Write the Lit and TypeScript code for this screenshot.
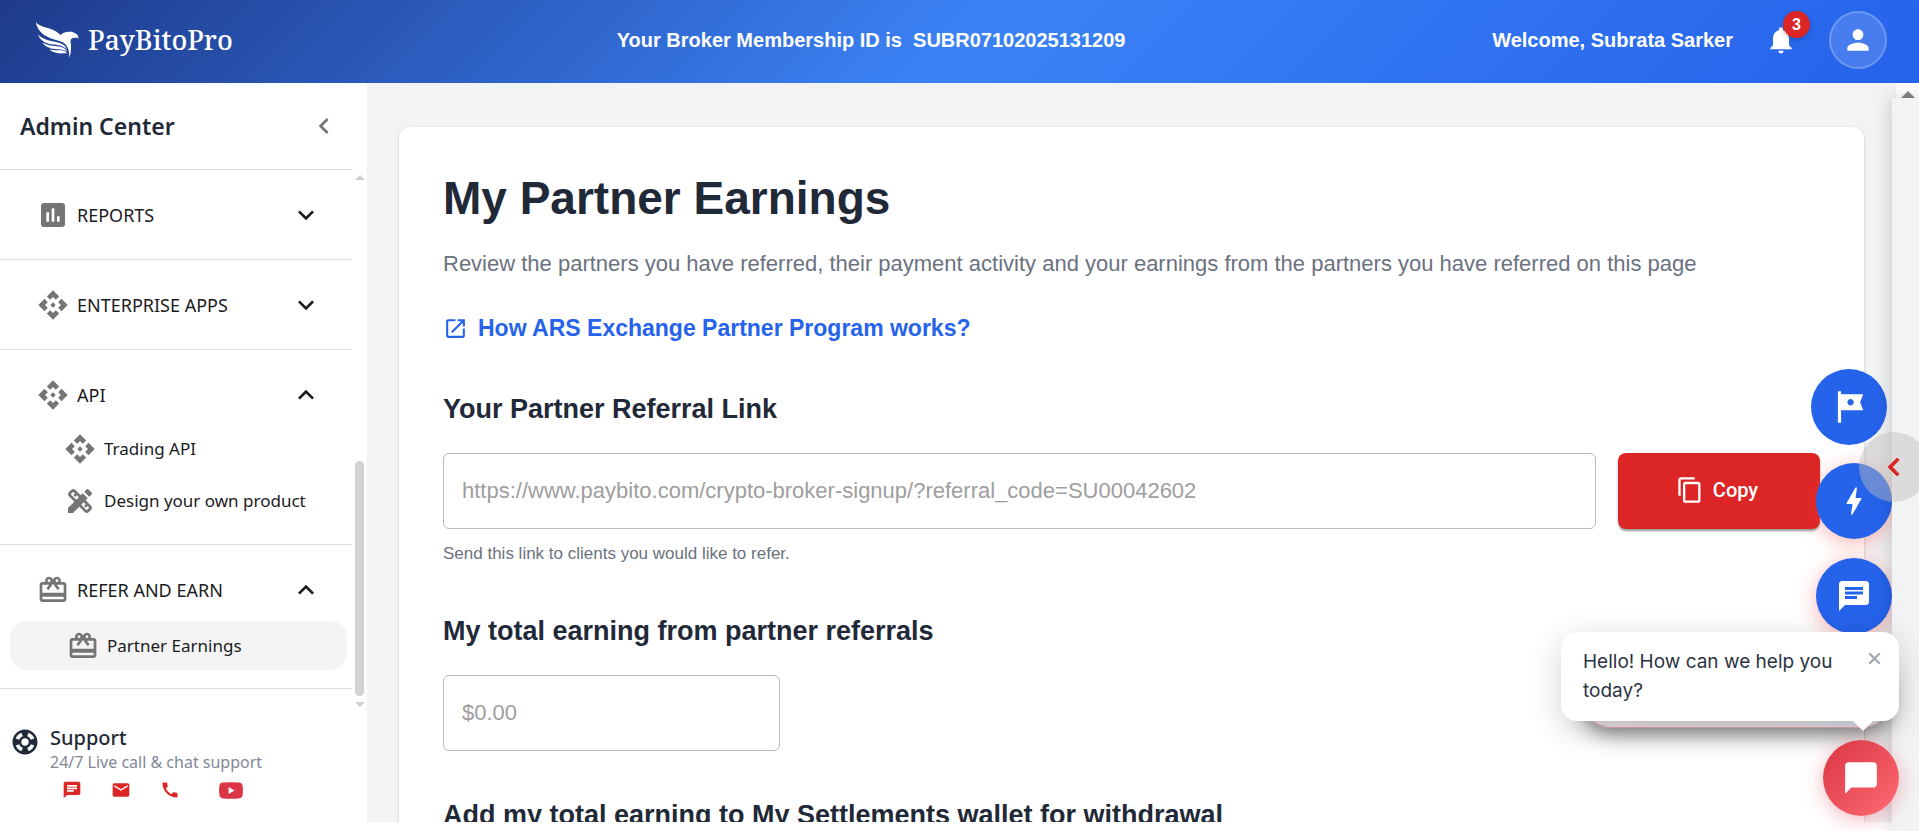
import { LitElement, html, css, svg } from "lit";
import { customElement, property } from "lit/decorators.js";

const ICONS: Record<string, string> = {
  assessment: "M19 3H5c-1.1 0-2 .9-2 2v14c0 1.1.9 2 2 2h14c1.1 0 2-.9 2-2V5c0-1.1-.9-2-2-2zM9 17H7v-7h2v7zm4 0h-2V7h2v10zm4 0h-2v-4h2v4z",
  api: "M14 12l-2 2-2-2 2-2 2 2zm-2-6l2.12 2.12 2.5-2.5L12 1 7.38 5.62l2.5 2.5L12 6zm-6 6l2.12-2.12-2.5-2.5L1 12l4.62 4.62 2.5-2.5L6 12zm12 0l-2.12 2.12 2.5 2.5L23 12l-4.62-4.62-2.5 2.5L18 12zm-6 6l-2.12-2.12-2.5 2.5L12 23l4.62-4.62-2.5-2.5L12 18z",
  design: "M16.24 11.51l1.57-1.57-3.75-3.75-1.57 1.57-4.14-4.13c-.78-.78-2.05-.78-2.83 0l-1.9 1.9c-.78.78-.78 2.05 0 2.83l4.13 4.13L3 17.25V21h3.75l4.76-4.76 4.13 4.13c.95.95 2.23.6 2.83 0l1.9-1.9c.78-.78.78-2.05 0-2.83l-4.13-4.13zm-7.06-.44L5.04 6.94l1.89-1.9L8.2 6.31 7.02 7.5l1.41 1.41 1.19-1.19 1.45 1.45-1.89 1.9zm7.88 7.89l-4.13-4.13 1.9-1.9 1.45 1.45-1.19 1.19 1.41 1.41 1.19-1.19 1.27 1.27-1.9 1.9zM20.71 7.04c.39-.39.39-1.02 0-1.41l-2.34-2.34c-.47-.47-1.12-.29-1.41 0l-1.83 1.83 3.75 3.75 1.83-1.83z",
  redeem: "M20 6h-2.18c.11-.31.18-.65.18-1 0-1.66-1.34-3-3-3-1.05 0-1.96.54-2.5 1.35l-.5.67-.5-.68C10.96 2.54 10.05 2 9 2 7.34 2 6 3.34 6 5c0 .35.07.69.18 1H4c-1.11 0-1.99.89-1.99 2L2 19c0 1.11.89 2 2 2h16c1.11 0 2-.89 2-2V8c0-1.11-.89-2-2-2zm-5-2c.55 0 1 .45 1 1s-.45 1-1 1-1-.45-1-1 .45-1 1-1zM9 4c.55 0 1 .45 1 1s-.45 1-1 1-1-.45-1-1 .45-1 1-1zm11 15H4v-2h16v2zm0-5H4V8h5.08L7 10.83 8.62 12 11 8.76l1-1.36 1 1.36L15.38 12 17 10.83 14.92 8H20v6z",
  support: "M12 2C6.48 2 2 6.48 2 12s4.48 10 10 10 10-4.48 10-10S17.52 2 12 2zm7.46 7.12l-2.78 1.15c-.51-1.36-1.58-2.44-2.95-2.94l1.15-2.78c2.1.8 3.77 2.47 4.58 4.57zM12 15c-1.66 0-3-1.34-3-3s1.34-3 3-3 3 1.34 3 3-1.34 3-3 3zM9.13 4.54l1.17 2.78c-1.38.5-2.47 1.59-2.98 2.97L4.54 9.13c.81-2.11 2.48-3.78 4.59-4.59zM4.54 14.87l2.78-1.15c.51 1.38 1.59 2.46 2.97 2.96l-1.17 2.78c-2.1-.81-3.77-2.48-4.58-4.59zm10.34 4.59l-1.15-2.78c1.37-.51 2.45-1.59 2.95-2.97l2.78 1.17c-.81 2.1-2.48 3.77-4.58 4.58z",
  more: "M16.59 8.59L12 13.17 7.41 8.59 6 10l6 6 6-6z",
  less: "M12 8l-6 6 1.41 1.41L12 10.83l4.59 4.58L18 14z",
  left: "M15.41 7.41L14 6l-6 6 6 6 1.41-1.41L10.83 12z",
  chat: "M20 2H4c-1.1 0-1.99.9-1.99 2L2 22l4-4h14c1.1 0 2-.9 2-2V4c0-1.1-.9-2-2-2zM6 9h12v2H6V9zm8 5H6v-2h8v2zm4-6H6V6h12v2z",
  bubble: "M20 2H4c-1.1 0-2 .9-2 2v18l4-4h14c1.1 0 2-.9 2-2V4c0-1.1-.9-2-2-2z",
  mail: "M20 4H4c-1.1 0-1.99.9-1.99 2L2 18c0 1.1.9 2 2 2h16c1.1 0 2-.9 2-2V6c0-1.1-.9-2-2-2zm0 4l-8 5-8-5V6l8 5 8-5v2z",
  phone: "M20.01 15.38c-1.23 0-2.42-.2-3.53-.56-.35-.12-.74-.03-1.01.24l-1.57 1.97c-2.83-1.35-5.48-3.9-6.89-6.83l1.95-1.66c.27-.28.35-.67.24-1.02-.37-1.11-.56-2.3-.56-3.53 0-.54-.45-.99-.99-.99H4.19C3.65 3 3 3.24 3 3.99 3 13.28 10.73 21 20.01 21c.71 0 .99-.63.99-1.18v-3.45c0-.54-.45-.99-.99-.99z",
  bell: "M12 22c1.1 0 2-.9 2-2h-4c0 1.1.89 2 2 2zm6-6v-5c0-3.07-1.64-5.64-4.5-6.32V4c0-.83-.67-1.5-1.5-1.5s-1.5.67-1.5 1.5v.68C7.63 5.36 6 7.92 6 11v5l-2 2v1h16v-1l-2-2z",
  person: "M12 12c2.21 0 4-1.79 4-4s-1.79-4-4-4-4 1.79-4 4 1.79 4 4 4zm0 2c-2.67 0-8 1.34-8 4v2h16v-2c0-2.66-5.33-4-8-4z",
  copy: "M16 1H4c-1.1 0-2 .9-2 2v14h2V3h12V1zm3 4H8c-1.1 0-2 .9-2 2v14c0 1.1.9 2 2 2h11c1.1 0 2-.9 2-2V7c0-1.1-.9-2-2-2zm0 16H8V7h11v14z",
  open: "M19 19H5V5h7V3H5c-1.11 0-2 .9-2 2v14c0 1.1.89 2 2 2h14c1.1 0 2-.9 2-2v-7h-2v7zM14 3v2h3.59l-9.83 9.83 1.41 1.41L19 6.41V10h2V3h-7z",
  tour: "M21 4H7V2H5v20h2v-8h14l-2-5 2-5zm-6 5c0 1.1-.9 2-2 2s-2-.9-2-2 .9-2 2-2 2 .9 2 2z",
  bolt: "M11 21h-1l1-7H7.5c-.58 0-.57-.32-.38-.66.19-.34.05-.08.07-.12C8.48 10.94 10.42 7.54 13 3h1l-1 7h3.5c.49 0 .56.33.47.51l-.07.15C12.96 17.55 11 21 11 21z",
  close: "M19 6.41L17.59 5 12 10.59 6.41 5 5 6.41 10.59 12 5 17.59 6.41 19 12 13.41 17.59 19 19 17.59 13.41 12z",
};

const icon = (name: string, size: number) => html`<svg
  width=${size} height=${size} viewBox="0 0 24 24" fill="currentColor" aria-hidden="true"
>${svg`<path d=${ICONS[name]}></path>`}</svg>`;

interface NavItem { icon: string; label: string; active?: boolean }
interface NavSection { icon: string; label: string; items?: NavItem[] }

const SECTIONS: NavSection[] = [
  { icon: "assessment", label: "REPORTS" },
  { icon: "api", label: "ENTERPRISE APPS" },
  {
    icon: "api", label: "API",
    items: [{ icon: "api", label: "Trading API" }, { icon: "design", label: "Design your own product" }],
  },
  { icon: "redeem", label: "REFER AND EARN", items: [{ icon: "redeem", label: "Partner Earnings", active: true }] },
];

const reset = css`
  * { box-sizing: border-box; margin: 0; }
  svg { display: block; flex: none; }
  button { border: 0; background: none; padding: 0; font: inherit; color: inherit; cursor: pointer; }
  a { color: inherit; text-decoration: none; }
`;

@customElement("top-bar")
class TopBar extends LitElement {
  static styles = [reset, css`
    :host {
      display: flex; align-items: center; justify-content: space-between; flex: none;
      height: 83px; padding: 0 32px 3px; color: #fff; box-sizing: border-box;
      background: linear-gradient(135deg, #1e3a8a 0%, #3b82f6 50%, #2563eb 100%);
      font: bold 20px/30px "Liberation Sans", Arial, sans-serif;
    }
    .logo { display: flex; align-items: center; gap: 9px; width: 218px; padding-left: 4px; font: 500 27px/36px "Noto Serif", serif; }
    .member { white-space: pre; }
    .user { display: flex; align-items: center; gap: 32px; }
    .bell { position: relative; }
    .badge {
      position: absolute; left: 18px; top: -13px; width: 27px; height: 27px; border-radius: 50%;
      background: #dc2626; font-size: 16px; line-height: 27px; text-align: center;
      box-shadow: 0 2px 4px rgba(0, 0, 0, 0.2);
    }
    .avatar {
      display: grid; place-items: center; width: 58px; height: 58px; border-radius: 50%;
      background: rgba(255, 255, 255, 0.15); border: 2px solid rgba(255, 255, 255, 0.2);
    }
  `];
  render() {
    return html`
      <a class="logo" href="#">
        <svg width="43" height="36" viewBox="0 0 43 36" fill="#fff" aria-hidden="true">
          <path d="M0 0C2 3 5 4 10 5.500C17 7.500 21 9.500 24.500 13C26 11.500 27.500 10.500 30 10.200C34 9.300 37.500 9.800 39 11.300C41 12 42.700 13.500 42.300 17C41.500 15.800 40.500 15.700 39 15.800C36 16 34.300 17.200 34.500 19.500C35.600 25 35.200 31 33.300 36C33.500 29 32 24 28 21C24 18.200 15 17.500 9 13.500C4 10 .5 5.500 0 0Z"/>
          <path d="M2 12.500C7 17.500 14 19 20 20C25.500 21 29.500 23 31 27.500C27 23.500 22 23 16 22.300C9.500 21.500 4 18.500 2 12.500Z"/>
          <path d="M6.500 20.500C11 23.500 16 23.800 21 24.200C26 24.700 29.500 26 31 29.500C27.500 27.200 23.500 27.300 19 27C13.500 26.600 9 24.500 6.500 20.500Z"/>
          <path d="M13.500 27.500C18 28.500 22 28 25.500 28.300C28.500 28.700 30.200 29.800 31 31.500C28.500 31 26 31.600 23 31.300C19 30.900 15.500 29.800 13.500 27.500Z"/>
        </svg>
        <span>PayBitoPro</span>
      </a>
      <p class="member">Your Broker Membership ID is  SUBR07102025131209</p>
      <div class="user">
        <span>Welcome, Subrata Sarker</span>
        <button class="bell" aria-label="Notifications">${icon("bell", 32)}<span class="badge">3</span></button>
        <button class="avatar" aria-label="Account">${icon("person", 32)}</button>
      </div>`;
  }
}

@customElement("side-nav")
class SideNav extends LitElement {
  static styles = [reset, css`
    :host {
      display: flex; flex-direction: column; flex: none; width: 367px; background: #fff; color: #1b1b1d;
      font: 17px/26px "Noto Sans", sans-serif;
    }
    .head {
      display: flex; align-items: center; justify-content: space-between; height: 87px;
      margin-right: 15px; padding: 0 12px 0 20px; border-bottom: 1px solid #dedede;
    }
    .head h2 { font-size: 23px; line-height: 34px; font-weight: 600; color: #1f2937; }
    .head button { color: #757575; }
    .scroll { flex: 1; display: flex; min-height: 0; }
    .list { flex: 1; overflow: hidden; }
    section { padding: 17px 0; border-bottom: 1px solid #dedede; }
    .row {
      display: flex; align-items: center; gap: 8px; width: 100%; height: 55px; padding: 0 30px 0 37px;
      font-size: 18px; text-align: left;
    }
    .row span { flex: 1; }
    .row svg:first-child, .item svg { color: #757575; }
    .items { padding-top: 1px; }
    .item { display: flex; align-items: center; gap: 8px; height: 52px; padding-left: 64px; }
    .item.active { height: 49px; margin: 3px 5px 1px 10px; padding-left: 57px; border-radius: 16px; background: #f4f4f4; }
    .bar { display: flex; flex-direction: column; align-items: center; width: 15px; padding: 5px 0 4px; }
    .up, .down { border: 5px solid transparent; }
    .up { border-top: 0; border-bottom-color: #cfcfcf; }
    .down { border-bottom: 0; border-top-color: #cfcfcf; }
    .track { flex: 1; display: flex; flex-direction: column; justify-content: flex-end; padding: 6px 0; }
    .thumb { width: 9px; height: 46%; border-radius: 5px; background: #d2d2d2; }
    .help { display: grid; grid-template-columns: 30px 1fr; column-gap: 10px; padding: 14px 10px 22px; }
    .help > svg { color: #1f2937; margin-top: 2px; }
    .help h3 { font-size: 20px; line-height: 26px; font-weight: 500; color: #1f2937; }
    .help p { font-size: 16px; line-height: 22px; color: #828796; }
    .links { display: flex; align-items: center; padding: 7px 0 0 12px; gap: 29px; color: #dc2626; }
    .links a:last-child { padding-left: 10px; }
  `];
  render() {
    return html`
      <div class="head"><h2>Admin Center</h2><button aria-label="Collapse menu">${icon("left", 32)}</button></div>
      <div class="scroll">
        <nav class="list">
          ${SECTIONS.map((s) => html`<section>
            <button class="row">${icon(s.icon, 32)}<span>${s.label}</span>${icon(s.items ? "less" : "more", 32)}</button>
            ${s.items ? html`<div class="items">${s.items.map((i) => html`
              <a class="item ${i.active ? "active" : ""}" href="#">${icon(i.icon, 32)}<span>${i.label}</span></a>`)}</div>` : ""}
          </section>`)}
        </nav>
        <div class="bar"><i class="up"></i><div class="track"><div class="thumb"></div></div><i class="down"></i></div>
      </div>
      <div class="help">
        ${icon("support", 30)}
        <div>
          <h3>Support</h3>
          <p>24/7 Live call &amp; chat support</p>
          <div class="links">
            <a href="#" aria-label="Chat">${icon("chat", 20)}</a>
            <a href="#" aria-label="Email">${icon("mail", 20)}</a>
            <a href="#" aria-label="Call">${icon("phone", 20)}</a>
            <a href="#" aria-label="YouTube"><svg width="24" height="17" viewBox="0 0 24 17" aria-hidden="true">
              <path fill="#dc3545" d="M4 .6Q12-.3 20 .6 23.300 1 23.600 4 24.200 8.500 23.600 13 23.300 16 20 16.400 12 17.300 4 16.400 .7 16 .4 13-.2 8.500 .4 4 .7 1 4 .6Z"/>
              <path fill="#fff" d="M9.600 5v7l6-3.500z"/></svg></a>
          </div>
        </div>
      </div>`;
  }
}

@customElement("partner-earnings")
class PartnerEarnings extends LitElement {
  static styles = [reset, css`
    :host {
      display: block; flex: 1; min-width: 0; overflow: hidden; padding: 44px 32px 0; background: #f2f3f5;
      font: 22px/33px "Liberation Sans", Arial, sans-serif; color: #1f2937;
    }
    .card {
      min-height: 100%; padding: 43px 44px 200px; border-radius: 12px; background: #fff;
      box-shadow: 0 1px 3px rgba(0, 0, 0, 0.2);
    }
    h1 { font-size: 46px; line-height: 56px; }
    .intro { margin-top: 21px; color: #6b7280; }
    .guide {
      display: flex; align-items: center; gap: 10px; width: fit-content; margin-top: 31px;
      font-size: 23px; line-height: 34px; font-weight: bold; color: #2563eb;
    }
    h2 { margin: 44px 0 24px; font-size: 27px; line-height: 40px; }
    .line { display: flex; gap: 22px; }
    input {
      height: 76px; padding: 0 18px; border: 1px solid #b9b9b9; border-radius: 6px; background: #fff;
      font: inherit; color: #9e9e9e; outline: none;
    }
    .link { flex: 1; min-width: 0; }
    .total { width: 337px; display: block; }
    .copy {
      display: flex; align-items: center; justify-content: center; gap: 9px; width: 202px; border-radius: 8px;
      padding: 0 4px 2px 0;
      background: #dc2626; color: #fff; font: 500 20px/30px Roboto, sans-serif;
      box-shadow: 0 3px 2px -1px rgba(0, 0, 0, 0.25), 0 2px 3px rgba(0, 0, 0, 0.2);
    }
    .hint { margin-top: 12px; font-size: 17px; line-height: 26px; color: #6b7280; }
  `];
  render() {
    return html`
      <main class="card">
        <h1>My Partner Earnings</h1>
        <p class="intro">Review the partners you have referred, their payment activity and your earnings from the partners you have referred on this page</p>
        <a class="guide" href="#">${icon("open", 25)}<span>How ARS Exchange Partner Program works?</span></a>
        <h2><label for="link">Your Partner Referral Link</label></h2>
        <div class="line">
          <input id="link" class="link" type="text" readonly value="https://www.paybito.com/crypto-broker-signup/?referral_code=SU00042602" />
          <button class="copy">${icon("copy", 28)}<span>Copy</span></button>
        </div>
        <p class="hint">Send this link to clients you would like to refer.</p>
        <h2><label for="total">My total earning from partner referrals</label></h2>
        <input id="total" class="total" type="text" readonly value="$0.00" />
        <h2>Add my total earning to My Settlements wallet for withdrawal</h2>
      </main>`;
  }
}

@customElement("chat-dock")
class ChatDock extends LitElement {
  @property({ type: String }) message = "Hello! How can we help you today?";
  static styles = [reset, css`
    :host { position: absolute; inset: 0; pointer-events: none; color: #fff; }
    button { pointer-events: auto; }
    .fab {
      position: absolute; right: 27px; display: grid; place-items: center; width: 76px; height: 76px;
      border-radius: 50%; background: #2563eb;
    }
    .glow { box-shadow: 0 4px 20px rgba(239, 68, 68, 0.4); }
    .tour { right: 32px; bottom: 386px; }
    .quick { bottom: 292px; }
    .talk { bottom: 197px; }
    .panel {
      position: absolute; right: 0; top: 98px; bottom: 0; width: 27px; background: #f2f3f5;
      box-shadow: 0 0 20px rgba(0, 0, 0, 0.2);
    }
    .handle {
      position: absolute; right: -10px; bottom: 329px; width: 70px; height: 70px; border-radius: 50%;
      display: grid; place-items: center; background: rgba(190, 190, 190, 0.45); color: #dc2626;
    }
    .handle svg { stroke: currentColor; stroke-width: 0.6px; }
    .under {
      position: absolute; right: 29px; bottom: 103px; width: 307px; height: 70px; border-radius: 28px;
      background: linear-gradient(90deg, #ecdfe1, #dcdce6); border: 1px solid #dda5a8;
      box-shadow: 0 6px 20px rgba(0, 0, 0, 0.5);
    }
    .bubble {
      position: absolute; right: 20px; bottom: 110px; display: flex; width: 338px; padding: 15px 15px 16px 22px;
      border-radius: 16px; background: #fff; color: #2b3342; font: 19px/29px Inter, sans-serif;
      box-shadow: 0 8px 32px rgba(0, 0, 0, 0.18);
    }
    .bubble p { flex: 1; }
    .bubble button { align-self: flex-start; padding: 2px 0; color: #9ca3af; }
    .bubble svg { stroke: currentColor; stroke-width: 1px; }
    .tail { position: absolute; right: 26px; top: 100%; border: 10px solid transparent; border-top-color: #fff; border-bottom: 0; }
    .open {
      right: 20px; bottom: 15px; background: linear-gradient(135deg, #d93643, #ff6b72);
      box-shadow: 0 4px 20px rgba(220, 53, 69, 0.35);
    }
  `];
  render() {
    return html`
      <button class="fab tour" aria-label="Start tour">${icon("tour", 38)}</button>
      <button class="fab glow quick" aria-label="Quick actions">${icon("bolt", 36)}</button>
      <button class="fab glow talk" aria-label="Live chat">${icon("chat", 36)}</button>
      <div class="panel"></div>
      <button class="handle" aria-label="Open side panel">${icon("left", 36)}</button>
      <div class="under"></div>
      <div class="bubble">
        <p>${this.message}</p>
        <button aria-label="Dismiss">${icon("close", 19)}</button>
        <i class="tail"></i>
      </div>
      <button class="fab open" aria-label="Open chat">${icon("bubble", 38)}</button>`;
  }
}

@customElement("app-root")
class AppRoot extends LitElement {
  static styles = [reset, css`
    :host { display: flex; flex-direction: column; position: relative; height: 100vh; overflow: hidden; background: #fff; }
    .body { flex: 1; display: flex; min-height: 0; padding-bottom: 9px; }
    .strip { width: 23px; background: #fff; }
    .strip i { display: block; width: 14px; margin: 8px 0 0 5px; border: 7px solid transparent; border-top: 0; border-bottom-color: #858585; }
  `];
  render() {
    return html`
      <top-bar></top-bar>
      <div class="body">
        <side-nav></side-nav>
        <partner-earnings></partner-earnings>
        <div class="strip"><i></i></div>
      </div>
      <chat-dock></chat-dock>`;
  }
}
